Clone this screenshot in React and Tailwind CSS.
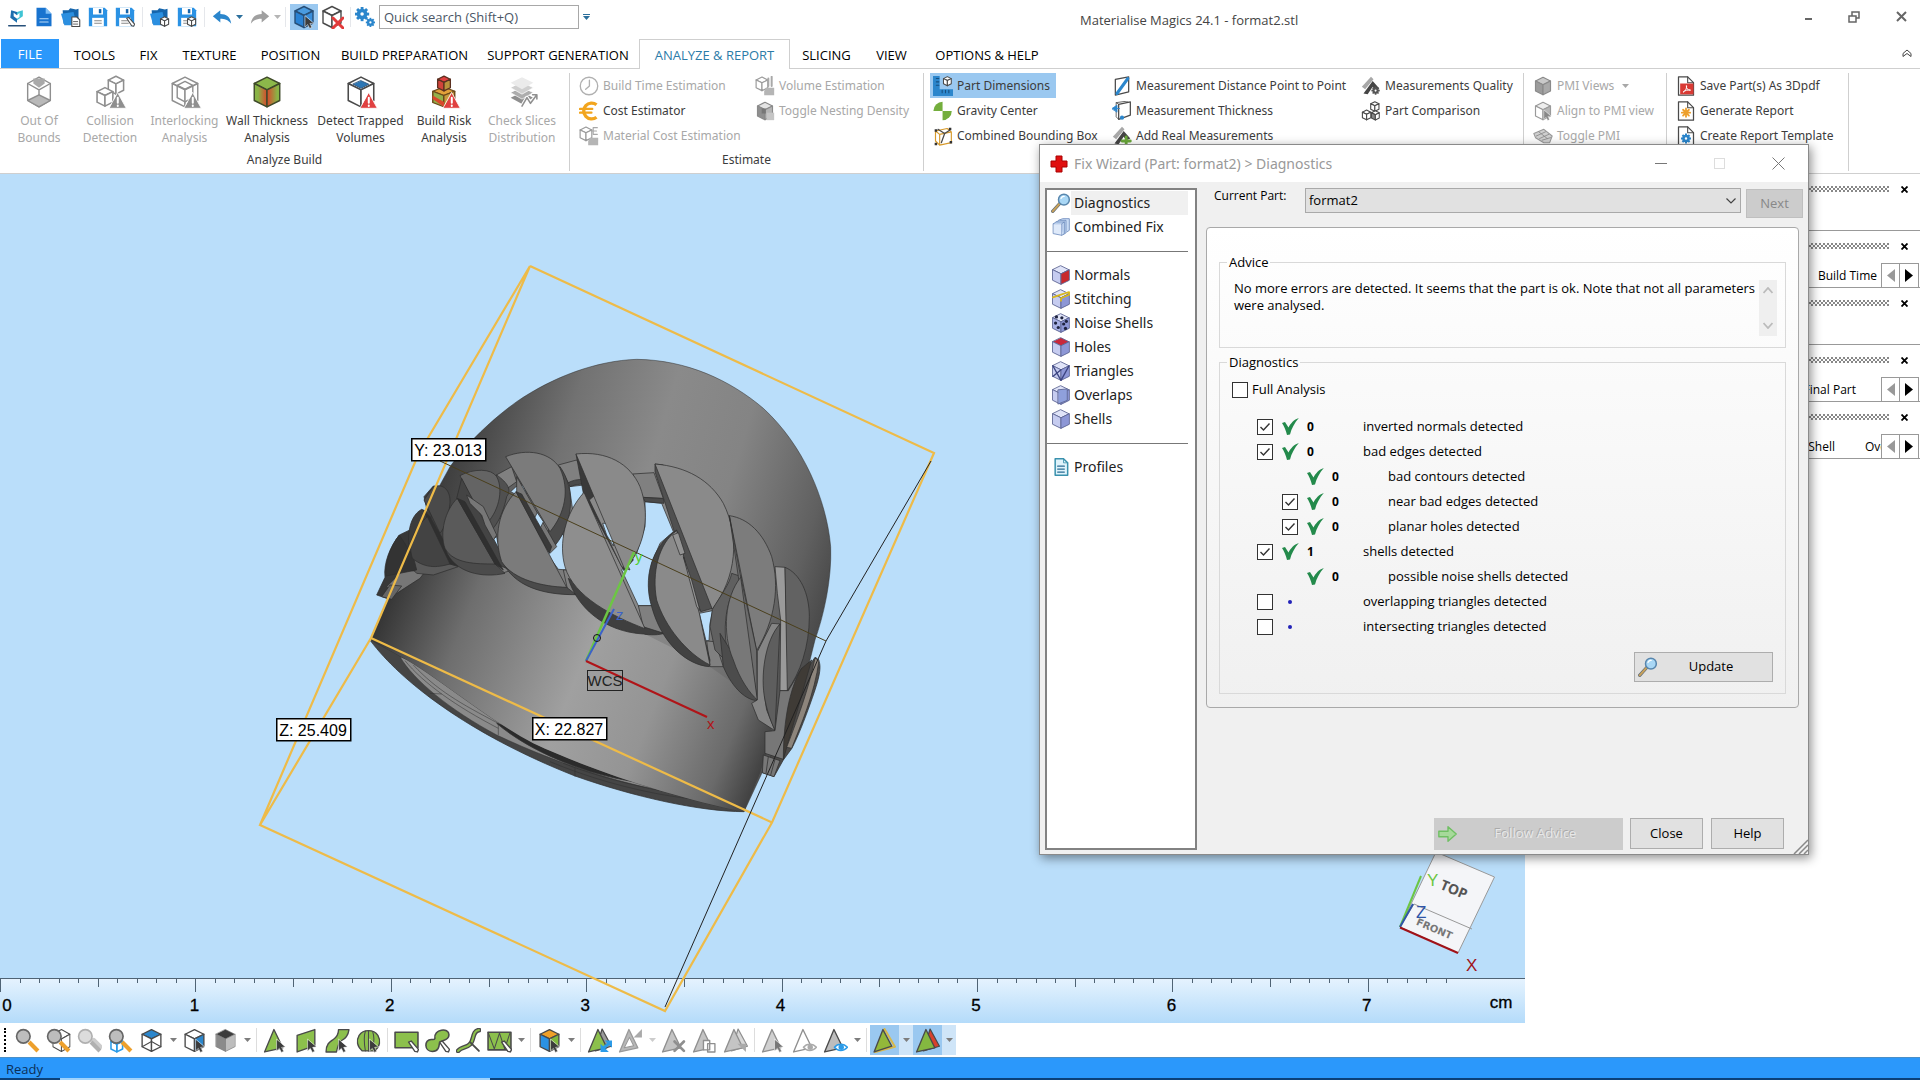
import React, { useState } from 'react';

const INK = '#4a4a4a';

/* ---------- shared drawing helpers ---------- */

const Svg = ({ size = 20, children, className = '' }) => (
    <svg width={size} height={size} viewBox="0 0 24 24" fill="none" strokeLinejoin="round" strokeLinecap="round" className={`shrink-0 ${className}`}>
        {children}
    </svg>
);

const CubeShape = ({ top = '#fff', left = '#fff', right = '#fff', stroke = INK, w = 1.4 }) => (
    <g stroke={stroke} strokeWidth={w}>
        <path d="M12 1.500 21 6 12 10.500 3 6Z" fill={top} />
        <path d="M3 6 12 10.500V22.500L3 18Z" fill={left} />
        <path d="M21 6 12 10.500V22.500L21 18Z" fill={right} />
    </g>
);

const SmallCube = ({ x = 0, y = 0, s = 0.5, ...rest }) => (
    <g transform={`translate(${x} ${y}) scale(${s})`}>
        <CubeShape w={2.4} {...rest} />
    </g>
);

const Warn = ({ color = '#e04040' }) => (
    <g>
        <path d="M17.500 12.500 23.500 23.500H11.500Z" fill={color} stroke="#fff" strokeWidth="0.6" />
        <path d="M17.500 16v3.600M17.500 21.500v.3" stroke="#fff" strokeWidth="1.4" />
    </g>
);

const Pointer = ({ color = '#3c3c3c' }) => (
    <path d="M13 11V22l2.700-2.400 2 3.800 2.200-1.100-2-3.700 3.600-.4Z" fill={color} stroke="#fff" strokeWidth="0.5" />
);

const Pen = () => <path d="M14 13.500 16.500 12.500 23.500 20.500 22.500 23 20 22.500Z" fill="#fff" stroke={INK} strokeWidth="1.3" />;

const GearShape = ({ cx, cy, r, color }) => (
    <g transform={`translate(${cx} ${cy})`}>
        {[0, 45, 90, 135].map((a) => (
            <rect key={a} x={-r * 0.2} y={-r} width={r * 0.4} height={r * 2} fill={color} transform={`rotate(${a})`} />
        ))}
        <circle r={r * 0.5} fill="#fff" stroke={color} strokeWidth={r * 0.5} />
    </g>
);

const Caret = ({ color = '#7d7d7d' }) => (
    <svg width="7" height="4" viewBox="0 0 7 4" className="shrink-0"><path d="M0 0h7L3.500 4Z" fill={color} /></svg>
);

/* ---------- quick access icons ---------- */

const Logo = () => (
    <Svg>
        <path d="M5 4 12 6V19L8 16 4 13Z" fill="#1d6fae" />
        <path d="M12 6 19 4V11L12 16Z" fill="#3fc4d4" />
        <path d="M8 7l4 3 3-3v5l-3 2-4-3Z" fill="#fff" />
        <path d="M2 22.500H22" stroke="#27507a" strokeWidth="1.600" />
    </Svg>
);
const DocIcon = () => (
    <Svg><path d="M3 1H14L21 8V23H3Z" fill="#1873cf" /><path d="M14 1V8H21Z" fill="#7dbdf5" /><path d="M7 14H17M7 18H17" stroke="#bcdcf8" strokeWidth="1.300" /></Svg>
);
const FolderBase = () => (
    <g><path d="M2 4H9L11 1.500 18 3 21 2V20H3Z" fill="#1565ac" /><path d="M0 8 15 6 19 22H4Z" fill="#2b8fe0" /></g>
);
const FolderDoc = () => (
    <Svg><FolderBase /><path d="M13 12H19L22.500 15.500V23.500H13Z" fill="#fff" stroke={INK} strokeWidth="1.300" /><path d="M15 17.500h5M15 20.500h5" stroke={INK} /></Svg>
);
const FolderBox = () => (
    <Svg><FolderBase /><SmallCube x={11} y={11} s={0.54} /></Svg>
);
const SaveBase = () => (
    <g><path d="M1 1H20L23 4V23H1Z" fill="#2b92e4" /><path d="M6 1H18V9H6Z" fill="#fff" /><path d="M13 2.500h3v5h-3Z" fill="#1565ac" /><path d="M5 13H19V23H5Z" fill="#fff" /><path d="M8 16.500H16M8 19.500H16" stroke="#888" strokeWidth="1.200" /></g>
);
const SaveIcon = () => <Svg><SaveBase /></Svg>;
const SaveEdit = () => <Svg><SaveBase /><Pen /></Svg>;
const SaveBox = () => <Svg><SaveBase /><SmallCube x={11} y={11} s={0.54} /></Svg>;
const Undo = ({ color = '#2b86cc', flip }) => (
    <Svg><path transform={flip ? 'translate(24 0) scale(-1 1)' : undefined} d="M1 11 10 4V8.500C17 8.500 22 12 23 20C19 15 15 14 10 14V18.500Z" fill={color} /></Svg>
);
const CubeSelect = () => <Svg size={24}><CubeShape top="#4a9be0" left="#2a82d4" right="#3a8fdc" stroke="#274f78" /><Pointer /></Svg>;
const CubeDelete = () => <Svg size={24}><CubeShape /><path d="M13 13 23 23M23 13 13 23" stroke="#e23b3b" strokeWidth="3" /></Svg>;
const Gears = () => <Svg><GearShape cx={8.5} cy={8.5} r={8.5} color="#2b86cc" /><GearShape cx={18.5} cy={18.5} r={5.5} color="#2b86cc" /></Svg>;

/* ---------- ribbon icons ---------- */

const OutOfBounds = () => (
    <Svg size={34}>
        <g stroke="#8f8f8f" strokeWidth="1"><path d="M12 1.500 20 6V18L12 22.500 4 18V6Z" /><path d="M4 6l8 4.500L20 6M12 10.500V14" /><path d="M4 18 12 14 20 18 12 22.500Z" fill="#b9b9b9" /></g>
        <path d="M8 2.500H16V6L12 9 8 6Z" fill="#a9a9a9" />
    </Svg>
);
const Collision = () => (
    <Svg size={34}><SmallCube x={9} y={0} s={0.6} stroke="#8f8f8f" w={1.8} /><SmallCube x={1} y={8} s={0.62} stroke="#8f8f8f" w={1.8} /><Warn color="#8f8f8f" /></Svg>
);
const Interlocking = () => (
    <Svg size={34}><CubeShape stroke="#8f8f8f" w={1} /><path d="M12 4.500 17.500 7.300V16L12 19 6.500 16V7.300Z M6.500 7.300 12 10 17.500 7.300" stroke="#8f8f8f" strokeWidth="1" /><Warn color="#8f8f8f" /></Svg>
);
const WallThickness = () => (
    <Svg size={34}>
        <defs>
            <linearGradient id="wl" x1="0" x2="1"><stop offset="0.3" stopColor="#8ab446" /><stop offset="1" stopColor="#d8482c" /></linearGradient>
            <linearGradient id="wr" x1="0" x2="1"><stop offset="0" stopColor="#d8482c" /><stop offset="0.8" stopColor="#8ab446" /></linearGradient>
        </defs>
        <CubeShape top="#8cb84a" left="url(#wl)" right="url(#wr)" w={1} stroke="#3f4a2a" />
    </Svg>
);
const Trapped = () => (
    <Svg size={34}><CubeShape w={1.1} /><path d="M12 4 17.500 6.500 12 9.400 6.500 6.500Z" fill="#2d77b5" stroke="#274f78" strokeWidth="0.6" /><Warn /></Svg>
);
const BuildRisk = () => (
    <Svg size={34}>
        <g transform="translate(1.500 7.500) scale(.86 .66)"><CubeShape top="#e2a13a" left="#93b04a" right="#c99a3e" w={1.2} stroke="#6b4a1a" /></g>
        <path d="M4 17 12 22.500V19L4 14.500Z" fill="#d8482c" />
        <SmallCube x={6} y={0} s={0.5} top="#e04040" left="#d0433a" right="#b9933c" stroke="#5a3020" w={1.8} />
        <Warn />
    </Svg>
);
const CheckSlices = () => (
    <Svg size={34}>
        <path d="M12 12 20 16 12 20.500 4 16Z" fill="#8f8f8f" /><path d="M12 8.500 20 12.500 12 17 4 12.500Z" fill="#adadad" stroke="#fff" strokeWidth=".5" />
        <path d="M12 5 20 9 12 13.500 4 9Z" fill="#cfcfcf" stroke="#fff" strokeWidth=".5" /><path d="M12 1.500 20 5.500 12 10 4 5.500Z" fill="#ebebeb" />
        <path d="M12 22 15.500 16 18 20 22.500 14M22.500 17v-3h-3" stroke="#fff" strokeWidth="2.600" /><path d="M12 22 15.500 16 18 20 22.500 14M22.500 17v-3h-3" stroke="#8f8f8f" strokeWidth="1.100" />
    </Svg>
);

const Clock = () => <Svg><circle cx="12" cy="12" r="10.500" stroke="#b0b0b0" strokeWidth="1.600" /><path d="M12.500 5V12L8 16" stroke="#b0b0b0" strokeWidth="1.600" /></Svg>;
const Euro = () => (
    <Svg><path d="M21 4.500A9.500 9.500 0 1 0 21 19.500" stroke="#f2a51e" strokeWidth="4" strokeLinecap="butt" /><path d="M1 9.500H16M1 14H15" stroke="#f2a51e" strokeWidth="2.600" /></Svg>
);
const GreyCost = ({ mark = true }) => (
    <Svg><SmallCube x={-1} y={0} s={0.78} stroke="#9a9a9a" w={1.8} /><path d="M13 14H23V23H11V18Z" fill="#b5b5b5" />{mark ? <path d="M22 2h-5v8h5M15 6h6" stroke="#a8a8a8" strokeWidth="1.400" /> : <path d="M16 12V3M20 12V1" stroke="#a8a8a8" strokeWidth="2.400" />}</Svg>
);
const GreyNest = () => <Svg><CubeShape top="#e4e4e4" left="#8f8f8f" right="#b5b5b5" stroke="#8a8a8a" /><path d="M8 9h5v6H8Z" fill="#777" /><path d="M14 14H23V23H14Z" fill="#c5c5c5" /></Svg>;
const PartDims = () => <Svg><path d="M0 0H8V16H24V24H0Z" fill="#2b86cc" /><path d="M4 3h3M4 7h3M4 11h3M11 20v-3M15 20v-3M19 20v-3" stroke="#174f80" strokeWidth="1.300" /><SmallCube x={11} y={0} s={0.52} /></Svg>;
const Gravity = () => <Svg><path d="M11.500 12V1A11 11 0 0 0 .500 12Z" fill="#74ae3d" /><path d="M11.500 12V23A11 11 0 0 0 22.500 12Z" fill="#74ae3d" /></Svg>;
const BBox = () => (
    <Svg><path d="M3 6 17 3 22 7V20L8 23 3 18Z M3 6 8 10 22 7M8 10V23" stroke="#d79a2c" strokeWidth="1.400" /><path d="M6 4 14 9 20 5M14 9 10 20" stroke={INK} strokeWidth="1.500" /><path d="M2 4h3v3H2ZM19 2h3v3h-3ZM2 20h3v3H2ZM20 18h3v3h-3Z" fill="#333" /></Svg>
);
const MeasDist = () => <Svg><path d="M4 4 20 1V19L4 23Z" fill="#fff" stroke={INK} strokeWidth="1.500" /><path d="M19 3 6 21" stroke="#2b86cc" strokeWidth="3.600" /></Svg>;
const MeasThick = () => <Svg><path d="M8 4 22 1V17L8 22Z" fill="#fff" stroke={INK} strokeWidth="1.500" /><path d="M8 4 5 2 19 0M8 22 5 19V2" stroke={INK} /><path d="M0 9 6 5v8ZM3 9h6" fill="#2b86cc" stroke="#2b86cc" /><circle cx="12" cy="20" r="2.500" fill="#2b86cc" /></Svg>;
const Caliper = ({ plus }) => (
    <Svg><path d="M1 13 12 1l3 3L5 16Z" fill="#a8a8a8" /><path d="M3 21 14 6l8 9-5 2-3-4-6 9Z" fill="#454545" />{plus ? <path d="M17 13v10M12 18h10" stroke="#6aa83a" strokeWidth="3.400" /> : <GearShape cx={17.5} cy={17.5} r={5} color="#555" />}</Svg>
);
const PartCompare = () => <Svg><SmallCube x={10} y={0} s={0.55} /><SmallCube x={0} y={10} s={0.56} /><SmallCube x={11} y={11} s={0.52} left="#888" /></Svg>;
const PmiCube = () => <Svg><CubeShape top="#c9c9c9" left="#9c9c9c" right="#a9a9a9" stroke="#8a8a8a" /></Svg>;
const PmiAlign = () => <Svg><CubeShape top="#eee" left="#fff" right="#b5b5b5" stroke="#9a9a9a" /><Pointer color="#888" /></Svg>;
const PmiToggle = () => <Svg><path d="M1 9 13 4 23 12 20 20 13 20 3 14Z" fill="#cfcfcf" stroke="#999" strokeWidth="1.300" /><path d="M4 12 15 7M8 15 19 10M7 7 17 15M11 17 21 14" stroke="#888" /></Svg>;
const ReportDoc = ({ children }) => <Svg><path d="M3 1H14L21 8V23H3Z" fill="#fff" stroke={INK} strokeWidth="1.500" /><path d="M14 1V8H21" stroke={INK} strokeWidth="1.300" />{children}</Svg>;
const PdfDoc = () => <ReportDoc><path d="M5 9H21V22H5Z" fill="#d93a34" /><path d="M9 19C13 17 13 12 12.500 11.500 12 15 14 17 17.500 17 14 16.500 11 17 9 19Z" stroke="#fff" strokeWidth="1.200" /></ReportDoc>;
const ReportGen = () => <ReportDoc><path d="M12 9v10M7 14h10M8.500 10.500l7 7M15.500 10.500l-7 7" stroke="#eda02c" strokeWidth="2.200" /></ReportDoc>;
const ReportTpl = () => <ReportDoc><GearShape cx={12} cy={15} r={6} color="#2b86cc" /></ReportDoc>;

/* ---------- dialog icons ---------- */

const Lens = ({ size = 20 }) => (
    <Svg size={size}><path d="M2 22 11 12" stroke="#5f6b78" strokeWidth="4" /><path d="M2 22 11 12" stroke="#c9a25a" strokeWidth="2.400" /><circle cx="15.500" cy="8" r="6.500" fill="#a9d7f5" stroke="#5886ad" strokeWidth="1.800" /><path d="M12 6.500c1-2 3-2.500 4-2.300" stroke="#fff" strokeWidth="1.400" /></Svg>
);
const WizCube = ({ top = '#e0e4f8', left = '#c6ccf0', right = '#8d97d6', children }) => (
    <Svg><g transform="translate(-1 -.6) scale(1.080 1.060)"><CubeShape top={top} left={left} right={right} stroke="#5e6694" w={1} />{children}</g></Svg>
);
const Combined = () => (
    <Svg><g stroke="#6d8cbd" fill="#c9dcf5"><path d="M9 4 14 2h8v14l-3 2" /><path d="M6 6l4-2h8v15l-3 2" /><path d="M3 8H13V22L3 20Z" fill="#dfeafa" /><path d="M3 8l3-2h10L13 8M16 6v14l-3 2" /></g></Svg>
);
const ProfileDoc = () => <Svg><path d="M5 2H15L20 7V22H5Z" fill="#dff3fb" stroke="#3a91ad" strokeWidth="1.800" /><path d="M15 2V7H20" stroke="#3a91ad" /><path d="M8 11H16M8 14.500H16M8 18H16" stroke="#2a6c94" strokeWidth="1.500" /></Svg>;
const GreenTick = () => (
    <svg width="17" height="17" viewBox="0 0 17 17" className="shrink-0"><path d="M0 5 3 4 6.500 9.500C8.500 5.500 12 1.500 16.800 0 12.500 5 9.500 10.500 8 16.500L5 17C4 12.500 2 8 0 5Z" fill="#238a4b" /></svg>
);

/* ---------- bottom toolbar icons ---------- */

const Mag = ({ grey, children }) => (
    <Svg size={25}>{children}<path d="M13.500 13.500 22 22" stroke={grey ? '#b0b0b0' : '#eda02c'} strokeWidth="4" strokeLinecap="butt" /><circle cx="8" cy="8" r="6.500" fill={grey ? '#dcdcdc' : '#bdbdbd'} stroke={grey ? '#b0b0b0' : '#666'} strokeWidth="1.600" /></Svg>
);
const Tri = ({ fill = '#8cc04c', stroke = INK, back, children }) => (
    <Svg size={25}>{back && <path d="M14.500 1 23.500 17.500 8 22Z" fill={back} stroke={stroke} strokeWidth="1.200" />}<path d="M10.500 1.500 19 19 1.500 23Z" fill={fill} stroke={stroke} strokeWidth="1.300" />{children}</Svg>
);
const Eye = ({ color }) => <g><path d="M11 18.500C14 14.500 20 14.500 23.500 18.500 20 22.500 14 22.500 11 18.500Z" fill="#fff" stroke={color} strokeWidth="1.400" /><circle cx="17.500" cy="18.500" r="2.600" fill={color} /></g>;
const G = '#8cc04c';

const TOOLBAR = [
    { name: 'Zoom', icon: <Mag /> },
    { name: 'Zoom part', icon: <Mag><g transform="translate(4 0) scale(.9 1)"><CubeShape w={1} /></g></Mag> },
    { name: 'Zoom all', icon: <Mag grey><path d="M16 12 22 18" stroke="#ccc" strokeWidth="5" /></Mag> },
    { name: 'Unzoom', icon: <Mag><SmallCube x={1} y={9} s={0.62} stroke="#2b9be8" top="none" left="none" right="none" /></Mag> },
    { name: 'View', icon: <Svg size={25}><CubeShape top="#2b86cc" w={1.3} /><path d="M3 18l9-5 9 5M12 10V13" stroke={INK} /></Svg> },
    { caret: true },
    { name: 'Select face', icon: <Svg size={25}><CubeShape right="#2b86cc" w={1.3} /><Pointer /></Svg> },
    { name: 'Shade', icon: <Svg size={25}><CubeShape top="#3c3c3c" left="#8a8a8a" right="#bdbdbd" stroke="#777" w={0.6} /></Svg> },
    { caret: true }, { sep: true },
    { name: 'Mark triangle', icon: <Tri><Pointer /></Tri> },
    { name: 'Mark plane', icon: <Svg size={25}><path d="M3 7 20 1.500V17L3 23Z" fill={G} stroke={INK} strokeWidth="1.300" /><Pointer /></Svg> },
    { name: 'Mark surface', icon: <Svg size={25}><path d="M13 1.500H23C22 9 18 11 16 12S12 18 11 23H1C1 15 5 13 8 11S13 6 13 1.500Z" fill={G} stroke={INK} strokeWidth="1.300" /><Pointer /></Svg> },
    { name: 'Mark shell', icon: <Svg size={25}><path d="M6 22C1 18 0 12 3 7 7 1 17 1 21 7 24 12 23 18 18 22Z" fill={G} stroke={INK} strokeWidth="1.300" /><path d="M9 3C7 9 8 16 9 22M12 2.500V22M16 3.500C18 9 17 16 16 20" stroke={INK} /><Pointer /></Svg> },
    { sep: true },
    { name: 'Rectangle selection', icon: <Svg size={25}><path d="M1 4H23V19H1Z" fill={G} stroke={INK} strokeWidth="1.500" /><Pen /></Svg> },
    { name: 'Freehand selection', icon: <Svg size={25}><path d="M9.500 10C8 1 23 -1 23 6.500 23 13 15 11.500 14 14 13.500 18 13 22.500 7 22.500 -1 22.500 -1 11 6 11 8 11 9 11.500 9.500 10Z" fill={G} stroke={INK} strokeWidth="1.500" /><Pen /></Svg> },
    { name: 'Brush', icon: <Svg size={25}><path d="M22 2C15 3 18 12 13 16 10 19 5 18 2 22" stroke={INK} strokeWidth="4.500" /><path d="M22 2C15 3 18 12 13 16 10 19 5 18 2 22" stroke={G} strokeWidth="2" /><path d="M14 14 22 22" stroke={INK} strokeWidth="1.800" /></Svg> },
    { name: 'Window selection', icon: <Svg size={25}><path d="M1 4H23V21H1Z" fill={G} stroke={INK} strokeWidth="1.500" /><path d="M1 4 7 20 12 5 17 20 22 5" stroke={INK} /><Pen /></Svg> },
    { caret: true }, { sep: true },
    { name: 'Colour faces', icon: <Svg size={25}><CubeShape top="#f0a028" left="#2b92e4" right="#7fb83e" w={1.3} /><Pointer /></Svg> },
    { caret: true }, { sep: true },
    { name: 'Expand', icon: <Tri back="#9a9a9a"><path d="M15 20 22 14" stroke="#2b9be8" strokeWidth="3" /><path d="M17 12h7v7ZM13 15v8h8Z" fill="#2b9be8" /></Tri> },
    { name: 'Shrink', icon: <Tri fill="#b8b8b8" stroke="#9a9a9a"><path d="M15 9 23 1v8Z" fill="#aaa" /><path d="M6 19 11 9 15 17Z" fill="#fff" stroke="#999" /></Tri> },
    { caret: true, off: true },
    { name: 'Delete marked', icon: <Tri fill="#c4c4c4" stroke="#8f8f8f"><path d="M13 13 22 22M22 13 13 22" stroke="#8f8f8f" strokeWidth="2.600" /></Tri> },
    { name: 'Copy marked', icon: <Tri fill="#c4c4c4" stroke="#8f8f8f"><path d="M11 12h6v9h-6ZM15 15h7v8h-7Z" fill="#fff" stroke="#8f8f8f" strokeWidth="1.300" /></Tri> },
    { name: 'Separate marked', icon: <Tri fill="#c4c4c4" stroke="#8f8f8f" back="#d8d8d8"><path d="M14 15h8v8Z" fill="#aaa" /></Tri> },
    { sep: true },
    { name: 'Select visible', icon: <Tri fill="#d0d0d0" stroke="#8f8f8f"><Pointer color="#777" /></Tri> },
    { name: 'Hide marked', icon: <Tri fill="#fff" stroke="#8f8f8f"><Eye color="#aaa" /></Tri> },
    { name: 'Show hidden', icon: <Tri fill="#bdbdbd"><Eye color="#2b9be8" /></Tri> },
    { caret: true }, { sep: true },
    { name: 'Mark good', on: true, icon: <Svg size={25}><path d="M12 1 22 18 3 23Z" stroke="#d8b84a" strokeWidth="2" /><path d="M10.500 1.500 19 17.500 2 23Z" fill="#93b83a" stroke={INK} strokeWidth="1.300" /></Svg> },
    { caret: true, on: true },
    { name: 'Mark bad', on: true, icon: <Tri back="#d8402c" fill="#84b840" /> },
    { caret: true, on: true },
];

/* ---------- window header ---------- */

const QuickAccess = () => {
    const sep = <span className="h-5 w-px bg-gray-200" />;
    const tightSep = <span className="-mx-[3px] h-5 w-px bg-gray-200" />;
    return (
        <div className="flex items-center gap-[7px] pt-px pl-[7px]">
            <button aria-label="Magics"><Logo /></button>
            <button aria-label="New"><DocIcon /></button>
            <button aria-label="Open"><FolderDoc /></button>
            <button aria-label="Save"><SaveIcon /></button>
            <button aria-label="Save as"><SaveEdit /></button>
            {sep}
            <button aria-label="Import part"><FolderBox /></button>
            <button aria-label="Save part"><SaveBox /></button>
            {sep}
            <button aria-label="Undo" className="flex items-center gap-1"><Undo /><Caret color="#2b6f9c" /></button>
            <button aria-label="Redo" className="flex items-center gap-1"><Undo flip color="#a0a0a0" /><Caret color="#b5b5b5" /></button>
            {tightSep}
            <div className="flex items-center">
                <button aria-label="Select part" className="flex h-[26px] w-[28px] items-center justify-center bg-[#9ac8f0]"><CubeSelect /></button>
                <button aria-label="Unload part" className="flex w-[28px] justify-center"><CubeDelete /></button>
            </div>
            {tightSep}
            <div className="flex items-center gap-1">
                <button aria-label="Settings"><Gears /></button>
                <input aria-label="Quick search" placeholder="Quick search (Shift+Q)" className="h-6 w-[200px] border border-[#a8a8a8] bg-white px-1 text-[13px] placeholder:text-gray-600" />
                <button aria-label="Customize" className="flex flex-col items-center gap-px"><span className="h-px w-[7px] bg-[#2b6f9c]" /><Caret color="#2b6f9c" /></button>
            </div>
        </div>
    );
};

const TABS = [
    ['TOOLS', 'w-[65px]'], ['FIX', 'w-[43px]'], ['TEXTURE', 'w-[79px]'], ['POSITION', 'w-[83px]'],
    ['BUILD PREPARATION', 'w-[145px]'], ['SUPPORT GENERATION', 'w-[162px]'], ['ANALYZE & REPORT', 'w-[151px]'],
    ['SLICING', 'w-[73px]'], ['VIEW', 'w-[57px]'], ['OPTIONS & HELP', 'w-[134px]'],
];

const Tabs = () => {
    const [tab, setTab] = useState('ANALYZE & REPORT');
    return (
        <nav className="flex h-[30px] shrink-0 border-b border-[#cfcfcf] pl-px text-[13px]">
            <button className="mr-[3px] h-[29px] w-[58px] bg-[#2b98fb] pt-[2px] text-white">FILE</button>
            {TABS.map(([label, width]) => (
                <button
                    key={label}
                    onClick={() => setTab(label)}
                    className={`h-[30px] shrink-0 whitespace-nowrap pt-[3px] ${width} ${tab === label ? 'border border-b-0 border-[#cfcfcf] bg-white text-[#2b7ba8]' : 'text-black'}`}
                >
                    {label}
                </button>
            ))}
            <button aria-label="Collapse ribbon" className="mr-2 ml-auto">
                <svg width="10" height="9" viewBox="0 0 10 9" fill="none" stroke="#444"><path d="M1 4.500 5 1l4 3.500v3L5 4.500 1 7.500Z" /></svg>
            </button>
        </nav>
    );
};

const BIG = [
    ['Out Of', 'Bounds', OutOfBounds, 'w-[70px]', true],
    ['Collision', 'Detection', Collision, 'w-[72px]', true],
    ['Interlocking', 'Analysis', Interlocking, 'w-[77px]', true],
    ['Wall Thickness', 'Analysis', WallThickness, 'w-[88px]', false],
    ['Detect Trapped', 'Volumes', Trapped, 'w-[99px]', false],
    ['Build Risk', 'Analysis', BuildRisk, 'w-[68px]', false],
    ['Check Slices', 'Distribution', CheckSlices, 'w-[88px]', true],
];

const Row = ({ icon, off, on, children }) => (
    <button
        disabled={off}
        className={`flex h-[25px] items-center gap-1 whitespace-nowrap pl-[3px] pr-1.5 ${on ? 'bg-[#9ac8f0]' : ''} ${off ? 'text-[#a8a8a8]' : 'text-[#3c3c3c]'}`}
    >
        {icon}{children}
    </button>
);

const Group = ({ label, width, children }) => (
    <section className="flex h-[98px] shrink-0 flex-col border-r border-[#cfcfcf]">
        <div className={`flex h-[78px] ${width}`}>{children}</div>
        <h2 className="text-center leading-[18px] text-[#3c3c3c]">{label}</h2>
    </section>
);

const Ribbon = () => (
    <div className="flex h-[105px] shrink-0 border-b border-[#cfcfcf] pt-1 font-['Noto_Sans',sans-serif] text-[12px]">
        <Group label="Analyze Build" width="w-[569px] pl-1">
            {BIG.map(([a, b, Icon, width, off]) => (
                <button key={a} disabled={off} className={`flex flex-col items-center whitespace-nowrap pt-[2px] leading-[17px] ${width} ${off ? 'text-[#a8a8a8]' : 'text-[#3c3c3c]'}`}>
                    <Icon /><span className="mt-[3px]">{a}</span><span>{b}</span>
                </button>
            ))}
        </Group>
        <Group label="Estimate" width="w-[353px] pl-[6px]">
            <div className="flex w-[176px] flex-col items-start">
                <Row off icon={<Clock />}>Build Time Estimation</Row>
                <Row icon={<Euro />}>Cost Estimator</Row>
                <Row off icon={<GreyCost />}>Material Cost Estimation</Row>
            </div>
            <div className="flex flex-col items-start">
                <Row off icon={<GreyCost mark={false} />}>Volume Estimation</Row>
                <Row off icon={<GreyNest />}>Toggle Nesting Density</Row>
            </div>
        </Group>
        <Group label="Measure" width="w-[599px] pl-[6px]">
            <div className="flex w-[179px] flex-col items-start">
                <Row on icon={<PartDims />}>Part Dimensions</Row>
                <Row icon={<Gravity />}>Gravity Center</Row>
                <Row icon={<BBox />}>Combined Bounding Box</Row>
            </div>
            <div className="flex w-[249px] flex-col items-start">
                <Row icon={<MeasDist />}>Measurement Distance Point to Point</Row>
                <Row icon={<MeasThick />}>Measurement Thickness</Row>
                <Row icon={<Caliper plus />}>Add Real Measurements</Row>
            </div>
            <div className="flex flex-col items-start">
                <Row icon={<Caliper />}>Measurements Quality</Row>
                <Row icon={<PartCompare />}>Part Comparison</Row>
            </div>
        </Group>
        <Group label="PMI" width="w-[142px] pl-[6px]">
            <div className="flex flex-col items-start">
                <Row off icon={<PmiCube />}>PMI Views <span className="ml-1"><Caret color="#a8a8a8" /></span></Row>
                <Row off icon={<PmiAlign />}>Align to PMI view</Row>
                <Row off icon={<PmiToggle />}>Toggle PMI</Row>
            </div>
        </Group>
        <Group label="Report" width="w-[181px] pl-[6px]">
            <div className="flex flex-col items-start">
                <Row icon={<PdfDoc />}>Save Part(s) As 3Dpdf</Row>
                <Row icon={<ReportGen />}>Generate Report</Row>
                <Row icon={<ReportTpl />}>Create Report Template</Row>
            </div>
        </Group>
    </div>
);

/* ---------- 3D view ---------- */

const CM = 195.4;

const Ruler = () => (
    <g>
        <rect x="0" y="978" width="1525" height="45" fill="url(#ruler)" />
        <path d="M0 978.500H1525" stroke="#4f6374" />
        {Array.from({ length: 75 }, (_, i) => {
            const x = Math.round((i * CM) / 10) + 0.5;
            const len = i % 10 === 0 ? 13 : i % 5 === 0 ? 8 : 4;
            return <path key={i} d={`M${x} 979v${len}`} stroke="#4f6374" />;
        })}
        <g fontFamily="Liberation Sans, sans-serif" fontSize="17" fill="#000" stroke="#000" strokeWidth=".3">
            {[0, 1, 2, 3, 4, 5, 6, 7].map((n) => (
                <text key={n} x={n === 0 ? 7 : n * CM - 1} y="1011" textAnchor="middle">{n}</text>
            ))}
            <text x="1501" y="1008" textAnchor="middle">cm</text>
        </g>
    </g>
);

const SKY = '#badefa';

const Ring = () => (
    <g transform="translate(350 340) scale(.33333)" stroke="#2e2e2e" strokeWidth="2.200" strokeLinejoin="round">
        {/* side links behind the body */}
        <path d="M148 585C120 620 100 670 105 712L80 765 125 780 155 735 225 700 200 560Z" fill="#383838" />
        <path d="M222 470 250 438 290 440 300 560 235 640 185 650C168 610 172 530 215 508L232 515Z" fill="#3c3c3c" />
        <path d="M1395 952C1415 960 1415 990 1395 1050 1375 1110 1345 1190 1325 1226L1300 1260 1272 1310 1237 1298 1245 1170Z" fill="#4c4a48" />
        {/* opening and lower rim */}
        <path d="M62 903C150 1020 350 1180 675 1308 850 1370 1050 1415 1182 1415L1190 1380 900 1300 300 930Z" fill="#454545" />
        <path d="M150 950C190 1020 300 1110 440 1185 620 1270 850 1350 1075 1374L900 1290 440 1060Z" fill="#8a8a8a" strokeWidth="1.500" />
        <path d="M165 962C220 1030 320 1100 445 1165M190 975C260 1050 330 1090 445 1150M240 1060 275 1062M445 1150V1185M675 1285V1310M640 1270C780 1325 950 1360 1060 1370M600 1265C780 1340 950 1370 1040 1378" fill="none" strokeWidth="1.500" />
        <path d="M440 1150C540 1235 700 1300 850 1325L800 1290 520 1170Z" fill="#2b2b2b" />
        {/* body */}
        <path
            d="M62 900 112 780 200 690 270 435 300 380C350 310 430 235 500 185 610 110 740 62 860 58 1010 60 1140 120 1240 205 1360 315 1430 480 1442 620 1446 720 1420 830 1395 900L1380 960 1300 1180 1240 1290 1182 1415C980 1375 720 1290 550 1210 400 1130 250 1000 150 948Z"
            fill="url(#body)"
            strokeWidth="1.500"
        />
        <path d="M112 780 180 690 270 670 470 690 650 750 880 880 1080 980 1220 1080 1270 1180 1230 1300 1182 1415C980 1375 720 1290 550 1210 400 1130 250 1000 150 948L62 900Z" fill="url(#band)" stroke="none" />
        {/* see-through gaps */}
        <g fill={SKY}>
            <path d="M482 455 498 440 520 435 530 462 510 470Z" />
            <path d="M658 440 720 433 735 460 720 485 702 457 668 510Z" />
            <path d="M590 640 640 580 655 690 625 688Z" />
            <path d="M425 600 440 590 450 645 435 640Z" />
            <path d="M885 485 935 490 970 575 930 610 905 670 898 740 910 797 865 797 815 690 860 640 885 560Z" />
            <path d="M1048 820 1088 812 1080 850 1077 902 1068 902Z" />
        </g>
        {/* connecting bars */}
        <g fill="#808080">
            <path d="M430 410 485 380 500 425 465 450Z" />
            <path d="M625 375 680 360 718 418 655 428Z" />
            <path d="M655 428C680 415 700 418 722 420L725 435C700 430 680 432 660 440Z" fill="#4a4a4a" />
            <path d="M848 402 912 398 940 475 878 472Z" />
            <path d="M878 472 940 476 942 490 885 485Z" fill="#4a4a4a" />
            <path d="M640 690 655 760 680 762 665 690Z" />
            <path d="M865 797 912 797 945 880 885 882Z" />
            <path d="M1070 903 1095 905 1120 980 1080 980Z" />
            <path d="M435 672 450 640 480 692 455 700Z" />
            <path d="M160 690 225 695 210 715 140 760 110 740Z" fill="#777" />
            <path d="M120 735 155 738 125 778 95 770Z" fill="#666" />
            <path d="M150 650 300 672 325 680 250 705 200 700Z" fill="#5a5a5a" />
        </g>
        {/* upper links */}
        <path d="M222 480 250 440C280 430 302 450 300 490 295 540 285 560 270 580Z" fill="#4a4a4a" />
        <path d="M440 405C475 430 485 450 470 470 455 540 430 570 410 580L405 555Z" fill="#505050" />
        <path d="M330 407C370 385 425 385 440 410 462 450 445 520 405 555Z" fill="#646464" />
        <path d="M335 415 480 690 440 672 320 475Z" fill="#444" />
        <path d="M350 465 360 490 395 525 405 555 430 600 440 585 400 500Z" fill="#777" />
        <path d="M630 380C680 450 670 560 605 628L590 600Z" fill="#4b4b4b" />
        <path d="M500 410 620 620 600 640 500 470Z" fill="#777" />
        <path d="M553 535 562 518 580 545 568 570Z" fill={SKY} />
        <path d="M467 350C530 325 600 335 630 385 660 450 645 520 600 575Z" fill="#7b7b7b" />
        <path d="M678 342 700 360 850 660 822 692 700 460Z" fill="#3a3a3a" />
        <path d="M718 480 735 465 840 690 815 680Z" fill="#8a8a8a" />
        <path d="M758 550 775 550 790 590 790 618 770 585Z" fill={SKY} />
        <path d="M678 342C770 332 840 370 870 440 900 520 890 610 825 690Z" fill="#8a8a8a" />
        <path d="M915 372 940 375 1087 805 1052 815 1010 690 915 395Z" fill="#505050" />
        <path d="M915 372C1010 380 1080 420 1120 490 1170 590 1160 710 1087 808Z" fill="#8a8a8a" />
        <path d="M1087 808C1110 770 1140 730 1145 700L1175 710C1120 780 1110 900 1150 985L1095 930 1080 860Z" fill="#606060" />
        <path d="M1138 527C1195 535 1240 580 1265 650 1290 740 1275 840 1220 932Z" fill="#7c7c7c" />
        <path d="M1138 527 1170 700 1220 932 1222 1080 1165 710Z" fill="#6c6c6c" />
        <path d="M1275 680 1305 682 1315 1052 1290 1052 1292 840 1282 760Z" fill="#9a9a9a" />
        <path d="M1305 682C1350 700 1378 760 1378 830 1378 920 1350 1000 1312 1052Z" fill="#626262" />
        {/* lower links */}
        <path d="M148 585C120 620 105 670 108 708L200 690 190 650Z" fill="#333" />
        <path d="M220 510 300 672 325 678 240 530Z" fill="#2f2f2f" />
        <path d="M232 530C200 560 170 600 187 655 230 690 270 680 300 672Z" fill="#434343" />
        <path d="M285 625C310 700 400 715 465 700L435 672Z" fill="#4b4b4b" />
        <path d="M322 475C285 510 268 580 285 625 310 672 380 672 435 672Z" fill="#5a5a5a" />
        <path d="M322 475 345 485 460 690 435 672Z" fill="#303030" />
        <path d="M455 660C490 740 580 765 678 764L650 742Z" fill="#4b4b4b" />
        <path d="M498 455C445 510 430 590 455 665 490 720 580 740 650 742Z" fill="#7b7b7b" />
        <path d="M498 455 515 462 605 620 598 640Z" fill="#3a3a3a" />
        <path d="M655 715C680 800 760 875 880 882 900 886 930 885 942 880L885 862Z" fill="#3f3f3f" />
        <path d="M702 457C645 520 625 610 645 680 670 770 790 830 885 866Z" fill="#8e8e8e" />
        <path d="M980 570C900 620 880 720 905 800 935 910 1010 975 1078 980L1080 960Z" fill="#424242" />
        <path d="M980 572C925 610 905 700 920 780 945 860 1010 940 1080 975L1048 820Z" fill="#8a8a8a" />
        <path d="M968 585 985 578 1005 640 990 645ZM1000 650 1025 720 1050 812 1040 800Z" fill="#939393" />
        <path d="M1120 980C1150 1050 1190 1080 1222 1082L1160 960 1110 880Z" fill="#4c4c4c" />
        <path d="M1172 712C1125 770 1115 880 1150 960 1170 1020 1200 1060 1222 1080Z" fill="#787878" />
        <path d="M1222 935 1265 850 1290 852C1240 920 1235 1030 1250 1110L1275 1172 1225 1140 1205 1090 1222 1080Z" fill="#858585" />
        <path d="M1290 852C1245 900 1230 1010 1245 1080 1255 1130 1270 1160 1275 1170Z" fill="#5e5e5e" />
        <path d="M1290 1052 1315 1052 1355 985 1300 1258 1245 1240 1245 1175 1275 1172Z" fill="#777" />
        <path d="M1355 985C1320 1040 1300 1140 1300 1258L1385 960Z" fill="#3f3b36" />
        <path d="M1395 955 1407 960C1395 1060 1350 1160 1325 1225L1310 1222C1345 1130 1375 1050 1395 955Z" fill="#8d857c" />
        <path d="M1240 1245 1290 1262 1272 1310 1237 1298ZM1255 1250 1248 1300M1275 1258 1262 1305" fill="#787878" />
    </g>
);

const Tag = ({ x, y, children }) => (
    <g>
        <rect x={x + 0.75} y={y + 0.75} width="74" height="22" fill="#fff" stroke="#000" strokeWidth="1.500" />
        <text x={x + 37} y={y + 17.5} textAnchor="middle" fontFamily="Liberation Sans, sans-serif" fontSize="16">{children}</text>
    </g>
);

const Scene = () => (
    <svg viewBox="0 173 1525 850" preserveAspectRatio="xMinYMax slice" className="h-full w-full">
        <defs>
            <linearGradient id="ruler" x1="0" x2="0" y1="0" y2="1"><stop offset="0" stopColor="#e6f3fe" /><stop offset="1" stopColor="#b4dbfa" /></linearGradient>
            <linearGradient id="body" gradientUnits="userSpaceOnUse" x1="150" y1="500" x2="1450" y2="900">
                <stop offset="0" stopColor="#303030" /><stop offset=".12" stopColor="#484848" /><stop offset=".3" stopColor="#727272" />
                <stop offset=".5" stopColor="#8a8a8a" /><stop offset=".68" stopColor="#848484" /><stop offset=".88" stopColor="#606060" /><stop offset="1" stopColor="#404040" />
            </linearGradient>
            <linearGradient id="band" gradientUnits="userSpaceOnUse" x1="80" y1="830" x2="1240" y2="1290">
                <stop offset="0" stopColor="#333" /><stop offset=".2" stopColor="#6e6e6e" /><stop offset=".5" stopColor="#a0a0a0" />
                <stop offset=".7" stopColor="#949494" /><stop offset=".9" stopColor="#6a6a6a" /><stop offset="1" stopColor="#3f3f3f" />
            </linearGradient>
        </defs>
        <rect x="0" y="173" width="1525" height="850" fill={SKY} />
        <Ruler />
        <Ring />

        {/* bounding box */}
        <g fill="none" stroke="#eebb48" strokeWidth="2.200">
            <path d="M530 266 934 453 772 822.500 665 1011 260 825 371 638 530 266 419 453 260 825" />
            <path d="M371 638 772 822.500" />
        </g>
        <path d="M931 461 826 641 665 1007" fill="none" stroke="#222" strokeWidth="1" />
        <path d="M440 461 826 641" fill="none" stroke="#4a3f1c" strokeWidth="1" />

        {/* axes */}
        <path d="M586 661 634 552" stroke="#6cc644" strokeWidth="2.500" />
        <path d="M586 661 614 609" stroke="#3c62c8" strokeWidth="2" />
        <path d="M586 661 707 717" stroke="#b01418" strokeWidth="2" />
        <circle cx="597" cy="638" r="3.500" fill="none" stroke="#111" />
        <g fontFamily="Liberation Sans, sans-serif" fontSize="15">
            <text x="635" y="562" fill="#4fd030">y</text>
            <text x="616" y="620" fill="#3c62c8">z</text>
            <text x="707" y="729" fill="#b01418">x</text>
            <text x="605" y="686" textAnchor="middle" fill="#222">WCS</text>
        </g>
        <rect x="587.500" y="670.500" width="35" height="20" fill="none" stroke="#222" />
        <Tag x={411} y={438}>Y: 23.013</Tag>
        <Tag x={532} y={717}>X: 22.827</Tag>
        <Tag x={276} y={718}>Z: 25.409</Tag>

        {/* orientation cube */}
        <path d="M1400 927 1436 852 1494.500 877 1458 953Z" fill="#f4f5f8" stroke="#999" />
        <path d="M1414 904 1472 929M1414 904 1400 927" stroke="#999" />
        <path d="M1400 927 1421 876" stroke="#6cc644" strokeWidth="2" />
        <path d="M1400 927 1413 904" stroke="#2f55a8" strokeWidth="2" />
        <path d="M1400 927.500 1458 953" stroke="#a01218" strokeWidth="2" />
        <g fontFamily="Liberation Sans, sans-serif" fontSize="17">
            <text x="1427" y="886" fill="#6cc644">Y</text>
            <text x="1416" y="918" fill="#2f55a8">Z</text>
            <text x="1466" y="971" fill="#a01218">X</text>
        </g>
        <text transform="translate(1452 894) rotate(23)" textAnchor="middle" fontFamily="Noto Sans, sans-serif" fontSize="14" fontWeight="700" fill="#555">TOP</text>
        <text transform="translate(1433 932) rotate(23)" textAnchor="middle" fontFamily="DejaVu Sans, sans-serif" fontSize="10" fontWeight="700" fill="#777">FRONT</text>
    </svg>
);

/* ---------- docked panes on the right ---------- */

const Pane = ({ tabs }) => (
    <div className="flex h-[57px] shrink-0 flex-col border-b border-[#999]">
        <div className="flex h-[30px] items-center justify-end pr-[7px]">
            <span className="mr-3 h-[6px] flex-1 bg-[conic-gradient(#888_25%,#fff_0_50%,#888_0_75%,#fff_0)] bg-[length:4px_4px]" />
            <button aria-label="Close pane" className="w-3">
                <svg width="7" height="7" viewBox="0 0 7 7" stroke="#000" strokeWidth="1.800"><path d="M.500 .500 6.500 6.500M6.500 .500 .500 6.500" /></svg>
            </button>
        </div>
        {tabs && (
            <div className="flex h-[26px] items-end overflow-hidden text-[12px]">
                <div className="flex flex-1 justify-end overflow-hidden whitespace-nowrap pt-1 leading-[22px]">{tabs}</div>
                <button aria-label="Previous tabs" className="flex h-6 w-[19px] items-center justify-center border border-b-0 border-[#999]">
                    <svg width="8" height="13"><path d="M8 0v13L0 6.500Z" fill="#999" /></svg>
                </button>
                <button aria-label="Next tabs" className="mr-px flex h-6 w-[19px] items-center justify-center border border-b-0 border-l-0 border-[#999]">
                    <svg width="8" height="13"><path d="M0 0v13L8 6.500Z" fill="#000" /></svg>
                </button>
            </div>
        )}
    </div>
);

/* ---------- fix wizard ---------- */

const WIZARD_TOP = [['Diagnostics', <Lens />], ['Combined Fix', <Combined />]];
const WIZARD_FIXES = [
    ['Normals', <WizCube right="#c8282c" />],
    ['Stitching', <WizCube><path d="M3 10 12 7 21 4V7L12 11V14" stroke="#d8b820" strokeWidth="2" /></WizCube>],
    ['Noise Shells', <WizCube left="#a9b2e6">{[[7, 5], [13, 6], [6, 12], [9, 17], [15, 13], [18, 10], [17, 18]].map(([x, y]) => <circle key={`${x}-${y}`} cx={x} cy={y} r="1.800" fill="#1f2440" />)}</WizCube>],
    ['Holes', <WizCube top="#c8283c" />],
    ['Triangles', <WizCube><path d="M3 6 12 22.500 21 6M12 10.500 3 18" stroke="#3c4480" strokeWidth="1.500" /></WizCube>],
    ['Overlaps', <WizCube><path d="M9 6 19 5V18L9 22Z" fill="#8fa0dc" stroke="#5e6694" /></WizCube>],
    ['Shells', <WizCube />],
];

const ListItem = ({ label, icon, active, onClick }) => (
    <li>
        <button onClick={onClick} className="flex h-6 w-full items-center pl-1 text-left">
            {icon}<span className={`h-6 flex-1 pl-[3px] leading-6 ${active ? 'bg-[#f0f0f0]' : ''}`}>{label}</span>
        </button>
    </li>
);

const CheckBox = ({ id, defaultChecked, label }) => (
    <span className="grid size-4 shrink-0 place-items-center">
        <input id={id} type="checkbox" aria-label={label} defaultChecked={defaultChecked} className="peer col-start-1 row-start-1 size-4 appearance-none border border-[#333] bg-white" />
        <svg width="12" height="12" viewBox="0 0 12 12" fill="none" stroke="#333" strokeWidth="1.400" className="pointer-events-none invisible col-start-1 row-start-1 peer-checked:visible"><path d="M1.500 6 4.500 9 10.500 2.500" /></svg>
    </span>
);

const CHECKS = [
    { label: 'inverted normals detected', box: true, on: true, count: 0 },
    { label: 'bad edges detected', box: true, on: true, count: 0 },
    { label: 'bad contours detected', sub: true, count: 0 },
    { label: 'near bad edges detected', sub: true, box: true, on: true, count: 0 },
    { label: 'planar holes detected', sub: true, box: true, on: true, count: 0 },
    { label: 'shells detected', box: true, on: true, count: 1 },
    { label: 'possible noise shells detected', sub: true, count: 0 },
    { label: 'overlapping triangles detected', box: true },
    { label: 'intersecting triangles detected', box: true },
];

const CheckRow = ({ label, sub, box, on, count }) => (
    <li className={`flex h-[25px] items-center ${sub ? 'pl-[62px]' : 'pl-[37px]'}`}>
        <span className="w-[25px]">{box && <CheckBox label={label} defaultChecked={on} />}</span>
        <span className="w-[25px]">
            {count === undefined ? <span className="ml-[6px] block size-[4px] rounded-full bg-[#2222b8]" /> : <GreenTick />}
        </span>
        <b className="w-[56px] text-[12px] font-bold">{count}</b>
        <span>{label}</span>
    </li>
);

const FixWizard = () => {
    const [page, setPage] = useState('Diagnostics');
    const item = ([label, icon]) => (
        <ListItem key={label} label={label} icon={icon} active={page === label} onClick={() => setPage(label)} />
    );
    return (
        <div role="dialog" aria-label="Fix Wizard" className="absolute top-[144px] right-[111px] z-10 flex h-[711px] w-[770px] flex-col border border-[#8a8a8a] bg-[#f0f0f0] text-[13px] text-black shadow-[2px_3px_10px_rgba(0,0,0,0.45)]">
            <header className="flex h-[37px] shrink-0 items-center bg-white pl-[10px] text-[14px] text-[#999]">
                <svg width="18" height="18" viewBox="0 0 18 18"><path d="M6 1H12V6H17V12H12V17H6V12H1V6H6Z" fill="#e01010" stroke="#a00" /></svg>
                <h1 className="ml-[6px] flex-1 font-['Noto_Sans',sans-serif]">Fix Wizard (Part: format2) &gt; Diagnostics</h1>
                <button aria-label="Minimize" className="flex w-[58px] justify-center"><span className="h-px w-3 bg-[#777]" /></button>
                <button aria-label="Maximize" className="flex w-[58px] justify-center"><span className="size-[11px] border border-[#ddd]" /></button>
                <button aria-label="Close window" className="flex w-[60px] justify-center">
                    <svg width="13" height="13" viewBox="0 0 13 13" stroke="#777"><path d="M.500 .500 12.500 12.500M12.500 .500 .500 12.500" /></svg>
                </button>
            </header>
            <div className="flex flex-1 pt-[6px] pb-1 pl-[5px]">
                <ul className="w-[152px] shrink-0 border-2 border-[#828282] bg-white pt-px pr-[7px] font-['Noto_Sans',sans-serif] text-[14px] text-[#222]">
                    {WIZARD_TOP.map(item)}
                    <li className="flex h-6 items-center"><hr className="w-full border-[#777]" /></li>
                    {WIZARD_FIXES.map(item)}
                    <li className="flex h-6 items-center"><hr className="w-full border-[#777]" /></li>
                    {item(['Profiles', <ProfileDoc />])}
                </ul>
                <div className="flex flex-1 flex-col pl-[9px]">
                    <div className="flex pl-2">
                        <label htmlFor="part" className="w-[91px] text-[12px] leading-4">Current Part:</label>
                        <div className="grid h-[25px] flex-1 items-center">
                            <select id="part" className="col-start-1 row-start-1 h-full appearance-none border border-[#a9a9a9] bg-[#e1e1e1] px-[3px]"><option>format2</option></select>
                            <svg width="10" height="6" viewBox="0 0 10 6" fill="none" stroke="#444" strokeWidth="1.200" className="pointer-events-none col-start-1 row-start-1 mr-[5px] justify-self-end"><path d="M.500 .500 5 5 9.500 .500" /></svg>
                        </div>
                        <button disabled className="mt-px mr-[5px] ml-[5px] h-[29px] w-[57px] border border-[#bfbfbf] bg-[#cccccc] text-[#888]">Next</button>
                    </div>
                    <div className="mt-[9px] mr-[9px] flex h-[481px] flex-col rounded border border-[#a9a9a9] bg-linear-to-b from-white to-[#f0f0f0] px-3 pt-[25px]">
                        <fieldset className="h-[95px] border border-[#d9d9d9] pl-[14px]">
                            <legend className="-ml-[7px] px-[2px] leading-[18px]">Advice</legend>
                            <div className="flex pt-[9px] pr-2">
                                <p className="flex-1 leading-[17px]">No more errors are detected. It seems that the part is ok. Note that not all parameters were analysed.</p>
                                <div className="flex h-[56px] w-[18px] flex-col items-center justify-between bg-[#efefef] py-[7px]">
                                    <svg width="10" height="7" viewBox="0 0 10 7" fill="none" stroke="#bbb" strokeWidth="1.800"><path d="M.500 6 5 1 9.500 6" /></svg>
                                    <svg width="10" height="7" viewBox="0 0 10 7" fill="none" stroke="#bbb" strokeWidth="1.800"><path d="M.500 1 5 6 9.500 1" /></svg>
                                </div>
                            </div>
                        </fieldset>
                        <fieldset className="mt-[5px] flex h-[341px] flex-col border border-[#d9d9d9]">
                            <legend className="ml-[7px] px-[2px] leading-[18px]">Diagnostics</legend>
                            <div className="flex h-[36px] items-center gap-1 pt-px pl-3">
                                <CheckBox id="full" /><label htmlFor="full">Full Analysis</label>
                            </div>
                            <ul className="pt-[7px]">{CHECKS.map((c) => <CheckRow key={c.label} {...c} />)}</ul>
                            <div className="flex justify-end pt-[13px] pr-3">
                                <button className="flex h-[30px] w-[139px] items-center border border-[#adadad] bg-[#e1e1e1] px-[3px]">
                                    <Lens /><span className="flex-1 pr-[5px] text-center">Update</span>
                                </button>
                            </div>
                        </fieldset>
                    </div>
                    <div className="mt-auto flex items-start justify-end pr-6">
                        <button disabled className="mr-[7px] flex h-8 w-[189px] items-center bg-[#cccccc] px-[3px] text-white">
                            <Svg size={22}><path d="M2 9H12V4L21 12 12 20V15H2Z" fill="#a6d99a" stroke="#6fbf63" strokeWidth="1.500" /></Svg>
                            <span className="flex-1 pr-2 text-center text-[#e8e8e8] [text-shadow:-1px_-1px_0_#aaa]">Follow Advice</span>
                        </button>
                        <button className="mr-2 h-[31px] w-[73px] border border-[#adadad] bg-[#e1e1e1]">Close</button>
                        <button className="h-[31px] w-[73px] border border-[#adadad] bg-[#e1e1e1]">Help</button>
                    </div>
                </div>
            </div>
            <svg width="15" height="15" viewBox="0 0 15 15" stroke="#888" strokeWidth="1.500" className="absolute right-0 bottom-0"><path d="M1 15 15 1M6 15 15 6M11 15 15 11" /></svg>
        </div>
    );
};

/* ---------- bottom bars ---------- */

const BottomToolbar = () => (
    <div className="flex h-[34px] shrink-0 items-center bg-white pl-1">
        <span className="mr-[6px] h-[24px] border-l-2 border-dotted border-black" />
        {TOOLBAR.map((t, i) => {
            if (t.sep) return <span key={i} className="flex w-[7px] shrink-0 justify-center"><span className="h-6 w-px bg-[#ddd]" /></span>;
            if (t.caret) {
                return (
                    <button key={i} aria-label="More" className={`flex h-[30px] shrink-0 items-center justify-center ${t.on ? 'w-[14px] bg-[#cfe5f8]' : 'w-[12px]'}`}>
                        <Caret color={t.off ? '#ccc' : '#7d7d7d'} />
                    </button>
                );
            }
            return (
                <button key={i} aria-label={t.name} className={`flex h-[30px] shrink-0 items-center justify-center ${t.on ? 'w-[29px] bg-[#9ac8f0]' : 'w-[31px]'}`}>{t.icon}</button>
            );
        })}
    </div>
);

export default function App() {
    return (
        <div className="relative flex h-screen flex-col overflow-hidden bg-white font-['Open_Sans',sans-serif]">
            <header className="flex h-[39px] shrink-0 justify-between pb-[6px]">
                <QuickAccess />
                <p className="flex-1 pt-[11px] pl-[490px] text-[13px] whitespace-nowrap text-[#444]">Materialise Magics 24.1 - format2.stl</p>
                <div className="flex items-center gap-9 pr-[13px]">
                    <button aria-label="Minimize app" className="pt-1"><span className="block h-[2px] w-[7px] bg-[#666]" /></button>
                    <button aria-label="Restore app"><svg width="12" height="12" viewBox="0 0 12 12" fill="none" stroke="#666" strokeWidth="1.500"><path d="M1 5H8V11H1ZM4 5V1H11V7H8" /></svg></button>
                    <button aria-label="Close app"><svg width="11" height="11" viewBox="0 0 11 11" stroke="#666" strokeWidth="2"><path d="M1 1 10 10M10 1 1 10" /></svg></button>
                </div>
            </header>
            <Tabs />
            <Ribbon />
            <main className="flex min-h-0 flex-1">
                <div className="min-w-0 flex-1"><Scene /></div>
                <aside className="w-[395px] shrink-0 bg-white">
                    <Pane />
                    <Pane tabs={<span className="pr-1">Build Time</span>} />
                    <Pane />
                    <Pane tabs={<span className="pr-[25px]">Final Part</span>} />
                    <Pane tabs={<><span className="pr-[30px]">Shell</span><span className="w-[16px] overflow-hidden">Overview</span></>} />
                </aside>
            </main>
            <BottomToolbar />
            <footer className="shrink-0">
                <p className="h-[21px] border-t border-[#4a8fc8] bg-[#2b98fb] pl-[6px] text-[13px] leading-[22px] text-[#0c2f57]">Ready</p>
                <div className="flex h-[2px] bg-[#0b4078]"><span className="ml-[60px] w-[430px] bg-[#9fd3fc]" /></div>
            </footer>
            <FixWizard />
        </div>
    );
}
